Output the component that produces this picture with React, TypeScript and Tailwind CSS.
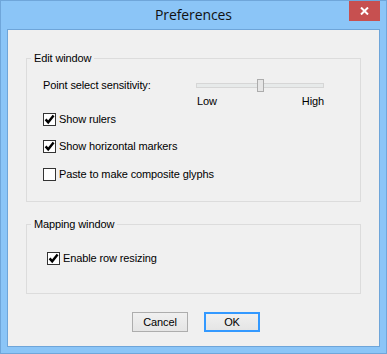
const font = { fontFamily: '"Liberation Sans", Arial, sans-serif' };

const CheckBox = ({ checked }: { checked?: boolean }) => (
  <span className="w-[13px] h-[13px] shrink-0 border border-[#333333] bg-white flex items-center justify-center">
    {checked && (
      <svg width="11" height="11" viewBox="0 0 11 11">
        <path d="M1.6 5.4 L4.2 8.3 L9.6 1.6" fill="none" stroke="#000" strokeWidth="2.4" />
      </svg>
    )}
  </span>
);

const CheckRow = ({ label, checked, className }: { label: string; checked?: boolean; className: string }) => (
  <label className={`flex items-center gap-[3px] h-[14px] ${className}`}>
    <CheckBox checked={checked} />
    <span>{label}</span>
  </label>
);

export default function App() {
  return (
    <div
      className="w-[387px] h-[354px] flex flex-col border border-[#6fa6da] bg-[#8bc5f7] text-[11px] tracking-[-0.12px] text-black"
      style={font}
    >
      {/* title bar */}
      <div className="relative h-[28px] flex items-center justify-center">
        <span
          className="text-[14px] tracking-[-0.1px] text-[#111] leading-none"
          style={{ fontFamily: '"Open Sans", "Noto Sans", sans-serif' }}
        >
          Preferences
        </span>
        <button className="absolute top-0 right-[6px] w-[31px] h-[20px] bg-[#c75050] flex items-center justify-center" aria-label="Close">
          <svg width="9" height="8" viewBox="0 0 9 8">
            <path d="M1 0.5 L8 7.5 M8 0.5 L1 7.5" stroke="#fff" strokeWidth="2" />
          </svg>
        </button>
      </div>

      {/* content */}
      <div className="mx-[6px] w-[373px] h-[318px] border border-[#6ea5d9] bg-[#f0f0f0] flex flex-col">
        <fieldset className="ml-[18px] mt-[21px] w-[335px] border border-[#dcdcdc]">
          <legend className="ml-[4px] px-[3px] leading-[14px]">Edit window</legend>
          <div className="pl-[16px] pb-[20px]">
            <div className="mt-[13px] h-[14px] flex items-center">
              <span className="w-[153px]">Point select sensitivity:</span>
              <div className="relative w-[128px] h-[5px] border border-[#d6d6d6] bg-[#e7eaea]">
                <span className="absolute left-[60px] -top-[5px] w-[7px] h-[13px] border border-[#acacac] bg-[#e6e6e6]" />
              </div>
            </div>
            <div className="mt-[2px] ml-[153px] w-[128px] h-[14px] pl-[1px] flex items-center justify-between">
              <span>Low</span>
              <span>High</span>
            </div>
            <CheckRow className="mt-[4px]" label="Show rulers" checked />
            <CheckRow className="mt-[13px]" label="Show horizontal markers" checked />
            <CheckRow className="mt-[14px]" label="Paste to make composite glyphs" />
          </div>
        </fieldset>

        <fieldset className="ml-[18px] mt-[15px] w-[335px] border border-[#dcdcdc]">
          <legend className="ml-[4px] px-[3px] leading-[14px]">Mapping window</legend>
          <div className="pl-[20px] pb-[28px]">
            <CheckRow className="mt-[20px]" label="Enable row resizing" checked />
          </div>
        </fieldset>

        <div className="mt-[18px] pl-[124px] flex gap-[16px]">
          <button className="w-[56px] h-[20px] border border-[#adadad] bg-gradient-to-b from-[#f0f0f0] to-[#e5e5e5] leading-none">
            Cancel
          </button>
          <button className="w-[56px] h-[20px] border-2 border-[#3399ff] bg-gradient-to-b from-[#f0f0f0] to-[#e5e5e5] leading-none">
            OK
          </button>
        </div>
      </div>
    </div>
  );
}
